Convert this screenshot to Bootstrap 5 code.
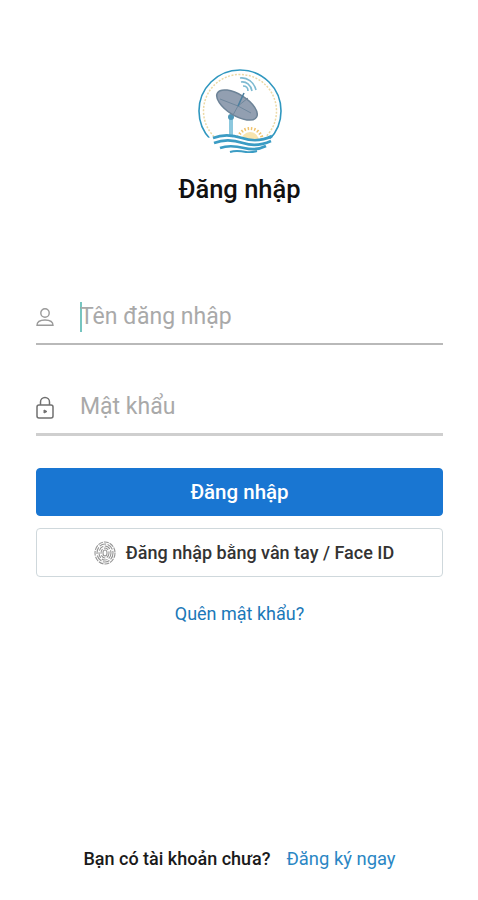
<!DOCTYPE html>
<html lang="vi">
<head>
    <meta charset="UTF-8">
    <meta name="viewport" content="width=device-width, initial-scale=1.0">
    <title>Đăng nhập</title>
    <link href="https://cdn.jsdelivr.net/npm/bootstrap@5.3.0/dist/css/bootstrap.min.css" rel="stylesheet">
    <style>
        body {
            font-family: Roboto, "Liberation Sans", sans-serif;
            background: #fff;
        }

        .login-page {
            height: 900px;
            padding: 69px 35px 0 36px;
        }

        .logo-wrap {
            height: 84px;
        }

        .login-title {
            font-size: 25.5px;
            font-weight: 500;
            line-height: 32px;
            color: #111;
            margin: 20px 0 0;
        }

        .login-form {
            margin-top: 86px;
        }

        .field-row {
            height: 54px;
            border-bottom: 2px solid #b9b9b9;
        }

        .field-row + .field-row {
            height: 55px;
            margin-top: 36px;
            border-bottom: 3px solid #cfcfcf;
        }

        .field-icon {
            width: 44px;
            flex-shrink: 0;
        }

        .field-caret {
            width: 2px;
            height: 30px;
            background: #76c5c0;
            margin-right: -2px;
            flex-shrink: 0;
        }

        .field-input {
            border: 0;
            outline: 0;
            padding: 0;
            width: 100%;
            font-size: 23px;
            background: transparent;
        }

        .field-input::placeholder {
            color: #a9a9a9;
            opacity: 1;
        }

        .btn-login {
            height: 48px;
            margin-top: 32px;
            background: #1976d2;
            border-color: #1976d2;
            color: #fff;
            font-size: 20.5px;
            font-weight: 500;
            border-radius: 4px;
        }

        .btn-finger {
            height: 49px;
            margin-top: 12px;
            padding-left: 9px !important;
            border: 1px solid #cfd8dc;
            border-radius: 4px;
            background: #fff;
            color: #333;
            font-size: 18px;
            font-weight: 500;
        }

        .finger-icon {
            margin-right: 10px;
        }

        .forgot-link {
            margin-top: 24px;
            font-size: 18px;
            line-height: 26px;
            color: #1b78b8;
            text-decoration: none;
        }

        .signup-row {
            margin-top: 220px;
            font-size: 18px;
            line-height: 24px;
        }

        .signup-text {
            color: #1a1a1a;
            font-weight: 500;
        }

        .signup-link {
            color: #2a86c4;
            font-size: 18.4px;
            text-decoration: none;
        }
    </style>
</head>
<body>

    <div class="login-page d-flex flex-column">
        <!-- Logo -->
        <div class="logo-wrap d-flex justify-content-center">
            <svg width="84" height="84" viewBox="0 0 84 84" fill="none">
                <path d="M13 71A41 41 0 1 1 71 71" stroke="#2f97bf" stroke-width="1.600"/>
                <path d="M16 67.600A36.500 36.500 0 1 1 68 67.600" stroke="#ecd9a6" stroke-width="1.500" stroke-dasharray="2 1.500"/>
                <path d="M33 48V69" stroke="#8cc8de" stroke-width="4"/>
                <circle cx="33" cy="48" r="3" fill="#4f97b8"/>
                <ellipse cx="39" cy="36" rx="23" ry="10.500" transform="rotate(32 39 36)" fill="#929fb1" stroke="#6d8397" stroke-width="1.500"/>
                <path d="M22 30L40 37L50 29M40 37L35 46M40 37L53 44" stroke="#6f879c" stroke-width="1"/>
                <path d="M40 37L46 24" stroke="#4b7f9f" stroke-width="1.600"/>
                <path d="M42 9C49 8 56 13 58 21M43 13C48 12 53 16 54 22M45 17C48 17 50 19 50 22" stroke="#7dbad1" stroke-width="1.600"/>
                <circle cx="52" cy="72" r="9" fill="#f8e4ae"/>
                <circle cx="52" cy="72" r="12.500" stroke="#f0c36d" stroke-width="3" stroke-dasharray="1.500 1.800"/>
                <path d="M4 70C22 65 40 68 52 72L80 69V84H4Z" fill="#fff"/>
                <path d="M15 69C25 65 35 66 44 69S62 73 74 67" stroke="#3b9cc4" stroke-width="2.600"/>
                <path d="M16 74C26 70 36 71 45 74S62 77 73 72" stroke="#3b9cc4" stroke-width="2.600"/>
                <path d="M22 79C30 76 38 77 46 79S60 81 68 77" stroke="#3b9cc4" stroke-width="2.600"/>
                <path d="M32 83C38 81 43 82 48 83S55 83 59 82" stroke="#3b9cc4" stroke-width="2"/>
            </svg>
        </div>
        <h1 class="login-title text-center">Đăng nhập</h1>

        <!-- Form -->
        <form class="login-form d-flex flex-column" onsubmit="return false">
            <div class="field-row d-flex align-items-center">
                <div class="field-icon d-flex">
                    <svg width="18" height="20" viewBox="0 0 18 20" fill="none" stroke="#9a9a9a" stroke-width="1.4">
                        <circle cx="9" cy="6" r="4.2"/>
                        <path d="M1 18.3C1 15 4 13 9 13S17 15 17 18.3Z"/>
                    </svg>
                </div>
                <span class="field-caret"></span>
                <input class="field-input" type="text" placeholder="Tên đăng nhập">
            </div>
            <div class="field-row d-flex align-items-center">
                <div class="field-icon d-flex">
                    <svg width="18" height="23" viewBox="0 0 18 23" fill="none" stroke="#707070" stroke-width="1.5">
                        <path d="M4.5 9V6A4.5 4.5 0 0 1 13.500 6V9"/>
                        <rect x="1" y="9" width="16" height="13" rx="2"/>
                        <path d="M8 14L11 15.500L8 17Z" fill="#707070" stroke-width="1"/>
                    </svg>
                </div>
                <input class="field-input" type="password" placeholder="Mật khẩu">
            </div>

            <button type="submit" class="btn btn-login w-100 p-0">Đăng nhập</button>
            <button type="button" class="btn btn-finger w-100 p-0 d-flex align-items-center justify-content-center">
                <svg class="finger-icon" width="22" height="24" viewBox="0 0 22 24" fill="none" stroke="#959595" stroke-width="1.100">
                    <ellipse cx="11" cy="12" rx="10" ry="11" stroke-dasharray="5 1"/>
                    <ellipse cx="11" cy="12" rx="8" ry="9" stroke-dasharray="7 1.500"/>
                    <ellipse cx="11" cy="12" rx="6" ry="7" stroke-dasharray="6 1.500"/>
                    <ellipse cx="11" cy="12" rx="4" ry="5" stroke-dasharray="5 1.500"/>
                    <ellipse cx="11" cy="12" rx="2" ry="3"/>
                </svg>
                <span>Đăng nhập bằng vân tay / Face ID</span>
            </button>
            <a class="forgot-link text-center" href="#">Quên mật khẩu?</a>
        </form>

        <!-- Footer -->
        <div class="signup-row d-flex justify-content-center gap-3">
            <span class="signup-text">Bạn có tài khoản chưa?</span>
            <a class="signup-link" href="#">Đăng ký ngay</a>
        </div>
    </div>

<script src="https://cdn.jsdelivr.net/npm/bootstrap@5.3.0/dist/js/bootstrap.bundle.min.js"></script>
</body>
</html>
